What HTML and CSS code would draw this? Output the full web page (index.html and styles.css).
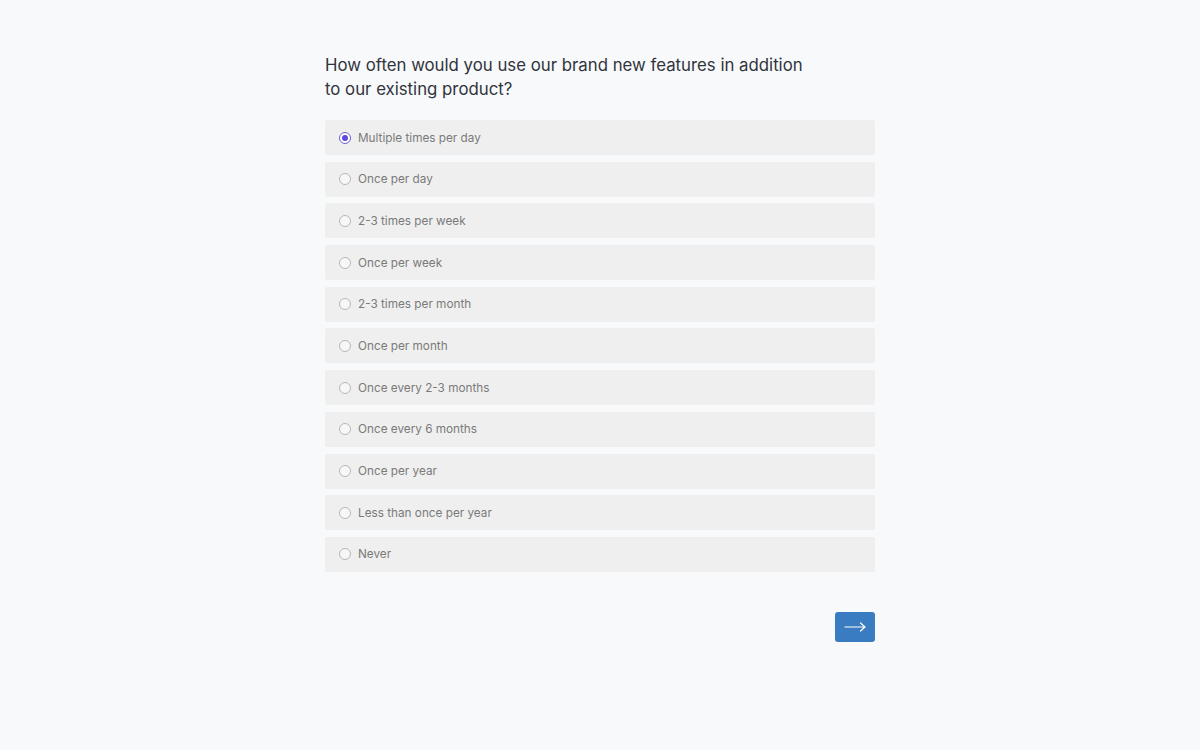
FILE: index.html
```html
<!DOCTYPE html>
<html lang="en">
<head>
<meta charset="utf-8">
<title>Survey</title>
<link rel="stylesheet" href="styles.css">
</head>
<body>
<main class="survey">
  <h1 class="question">How often would you use our brand new features in addition to our existing product?</h1>
  <div class="options">
    <label class="option"><span class="radio checked"></span><span class="label">Multiple times per day</span></label>
    <label class="option"><span class="radio"></span><span class="label">Once per day</span></label>
    <label class="option"><span class="radio"></span><span class="label">2-3 times per week</span></label>
    <label class="option"><span class="radio"></span><span class="label">Once per week</span></label>
    <label class="option"><span class="radio"></span><span class="label">2-3 times per month</span></label>
    <label class="option"><span class="radio"></span><span class="label">Once per month</span></label>
    <label class="option"><span class="radio"></span><span class="label">Once every 2-3 months</span></label>
    <label class="option"><span class="radio"></span><span class="label">Once every 6 months</span></label>
    <label class="option"><span class="radio"></span><span class="label">Once per year</span></label>
    <label class="option"><span class="radio"></span><span class="label">Less than once per year</span></label>
    <label class="option"><span class="radio"></span><span class="label">Never</span></label>
  </div>
  <div class="actions">
    <button class="next" type="button" aria-label="Next">
      <svg width="22" height="10" viewBox="0 0 22 10" fill="none" stroke="#ffffff" stroke-width="1.2" stroke-linecap="round" stroke-linejoin="round"><path d="M1 5H21M16.5 1L21 5L16.5 9"/></svg>
    </button>
  </div>
</main>
</body>
</html>
```

FILE: styles.css
```css
html, body {
  margin: 0;
  padding: 0;
  background: #f8f9fb;
}
body {
  font-family: Inter, "Noto Sans", sans-serif;
  color: #2b2f36;
}
.survey {
  width: 550px;
  margin: 0 auto;
  padding-top: 53px;
}
.question {
  margin: 0 0 19px 0;
  max-width: 488px;
  font-size: 16.8px;
  font-weight: 400;
  line-height: 24px;
  color: #30343b;
}
.options {
  display: flex;
  flex-direction: column;
  gap: 6.7px;
}
.option {
  display: flex;
  align-items: center;
  height: 35px;
  padding-left: 14px;
  background: #efefef;
  border-radius: 2px;
  box-sizing: border-box;
}
.radio {
  width: 12px;
  height: 12px;
  box-sizing: border-box;
  border: 1px solid #b8b8b8;
  border-radius: 50%;
  background: #f7f7f7;
  flex: none;
  position: relative;
}
.radio.checked {
  border-color: #6b5fd6;
  background: #ffffff;
}
.radio.checked::after {
  content: "";
  position: absolute;
  left: 2px;
  top: 2px;
  width: 6px;
  height: 6px;
  border-radius: 50%;
  background: #5b4bd8;
}
.label {
  margin-left: 7px;
  font-size: 11.75px;
  color: #7a7a7a;
}
.actions {
  display: flex;
  justify-content: flex-end;
  margin-top: 40px;
}
.next {
  width: 40px;
  height: 30px;
  border: none;
  border-radius: 3px;
  background: #3a7cc2;
  display: flex;
  align-items: center;
  justify-content: center;
  padding: 0;
  cursor: pointer;
}
```
